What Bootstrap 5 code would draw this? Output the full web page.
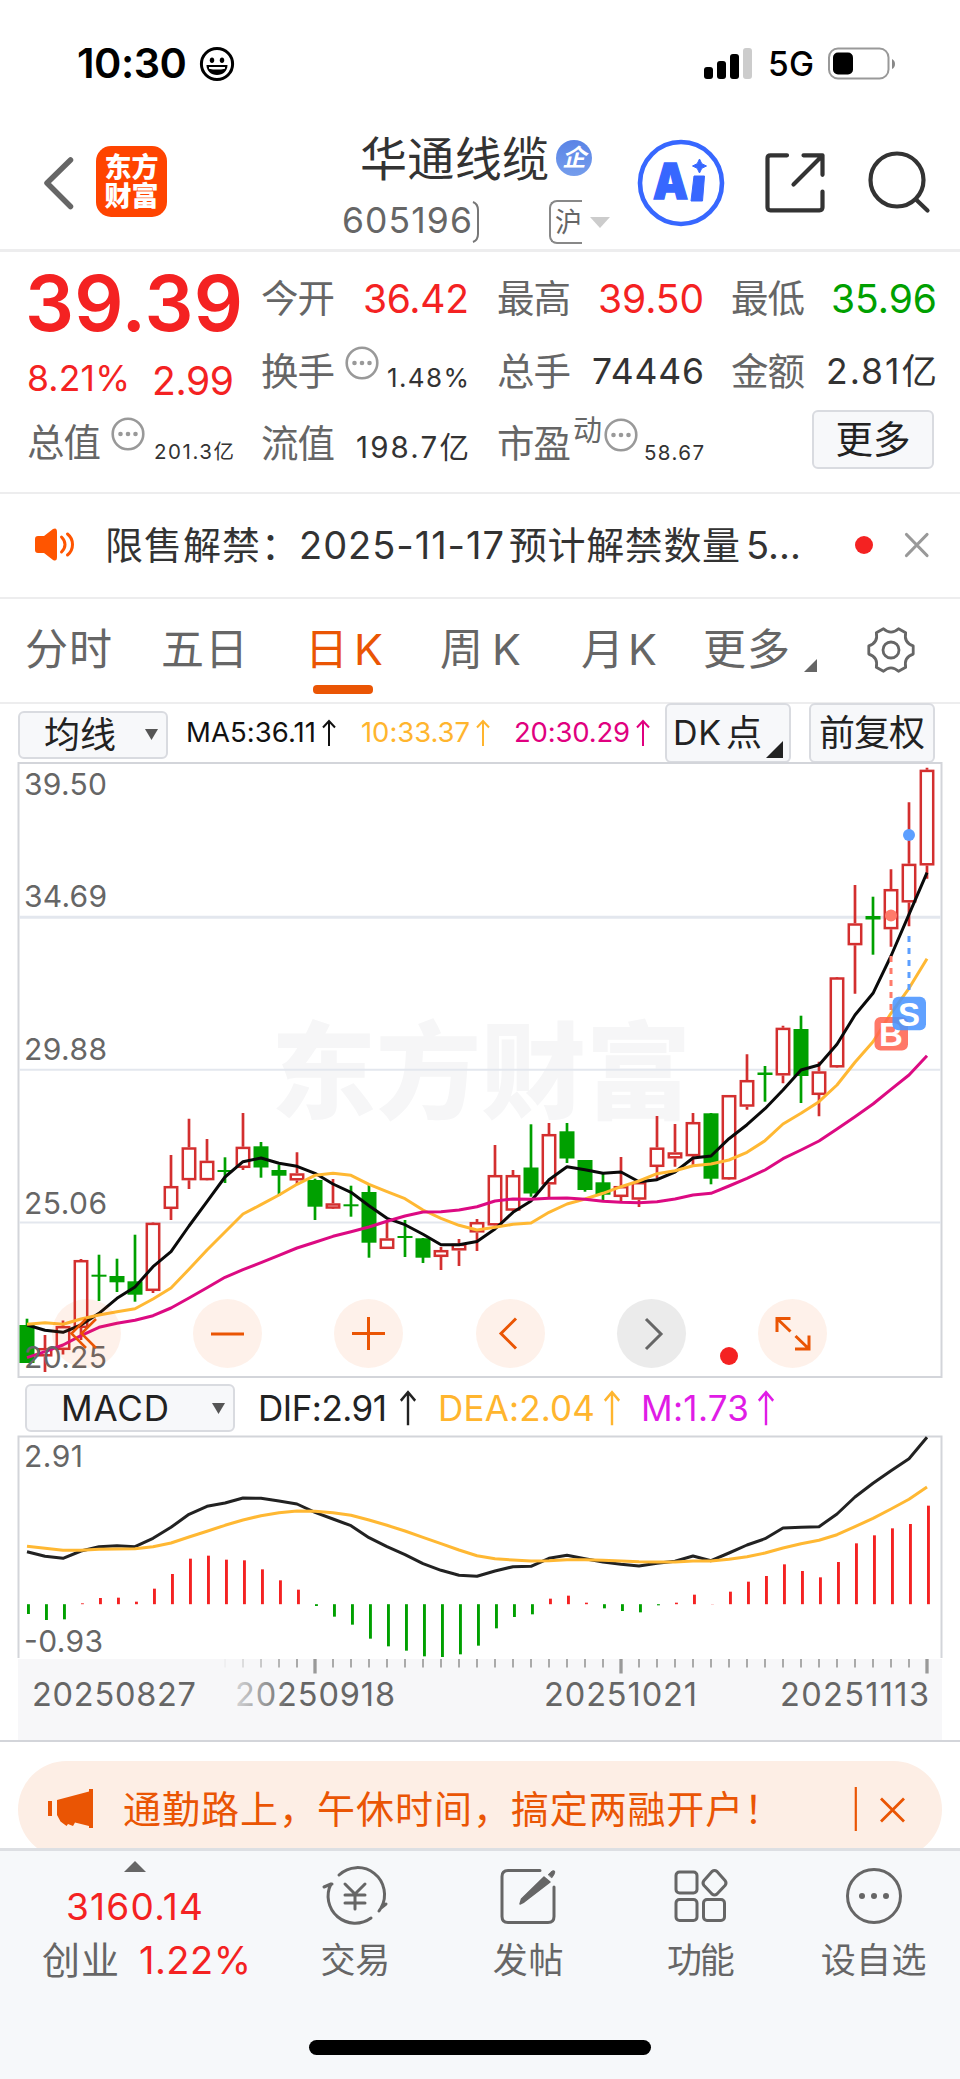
<!DOCTYPE html>
<html lang="zh-CN">
<head>
<meta charset="utf-8">
<meta name="viewport" content="width=device-width, initial-scale=1">
<title>华通线缆 605196</title>
<link href="https://cdn.jsdelivr.net/npm/bootstrap@5.3.0/dist/css/bootstrap.min.css" rel="stylesheet">
<style>
:root{--up:#f42222;--down:#00a000;--brand:#ea5504;--ink:#333;--muted-ink:#666;--rule:#ededee;--panel:#f7f8fa}
body{margin:0;width:960px;height:2079px;overflow:hidden;background:#fff;color:var(--ink);font-family:Inter,"Noto Sans CJK SC",sans-serif;line-height:1}
svg{display:block;flex:none;overflow:visible}
.screen{width:960px;height:2079px}
span[data-w],.cjk{display:inline-block;white-space:nowrap;flex:none}
.up{color:var(--up)}.down{color:var(--down)}.dim{color:var(--muted-ink)}
.f38{font-size:37.5px}.f39{font-size:39px}.f355{font-size:35.5px}.f30{font-size:29.5px}.f26{font-size:26px}.f20{font-size:20.5px}
.f38.dim{margin-top:1px}
.statusbar{height:98px;padding:30px 64px 0 77px}
.statusbar .clock{font-size:41.5px;font-weight:600;color:#000}
.statusbar .net{font-size:33.5px;font-weight:500;color:#000;margin:2px 12px 0 14px}
.titlebar{height:154px;border-bottom:3px solid var(--rule)}
.titlebar .left{width:342px;padding:48px 0 0 42px}
.app-logo{width:71px;height:71px;border-radius:15px;background:#ff4400;color:#fff;font-size:27px;font-weight:800;padding-top:7px;margin-left:22px;text-align:center;line-height:29px}
.stock{width:288px}
.stock .name{font-size:47px;padding:36px 0 0 18px;height:84px}
.ent{width:36px;height:36px;margin-left:7px;border-radius:50%;background:linear-gradient(#5a84e6,#759dec);color:#fff;font-size:24px;font-weight:700;font-style:italic;line-height:36px;text-align:center}
.exch{width:33px;height:44.5px;margin-left:69px;border:2px solid #888;border-right:0;border-radius:8px 0 0 8px;font-size:27px;padding-left:4px}
.quotes{height:242px;border-bottom:2px solid var(--rule);padding-left:27px}
.q-col{flex:none;width:208px;margin-right:28px}
.q-col:nth-child(1){width:212px;margin-right:22px}
.q-col:nth-child(3){width:207px;margin-right:27px}
.q-col:nth-child(4){width:206px;margin-right:0}
.q-cell{height:72px;padding-top:28px}
.q-cell:first-child{padding-top:27px}
.info{margin:-6px 0 0 10px}
.more-btn{width:122px;height:59px;margin-right:3px;border:2px solid #d9dbe0;border-radius:6px;background:var(--panel);color:#222}
.notice{height:105px;border-bottom:2px solid var(--rule);padding:0 0 2px 34px;font-size:38px}
.tabs-row{height:105px;border-bottom:2px solid var(--rule);font-size:43px;color:var(--muted-ink);padding:0 0 2px 25px}
.tabs-row .active-tab{color:var(--brand)}
.tabs-row .active-tab::after{content:"";position:absolute;left:8px;top:57px;width:60px;height:9px;border-radius:4px;background:var(--brand)}
.ma-row{height:58px;padding-left:18px;font-size:27.5px}
.pill{border:2px solid #d9dbe0;border-radius:6px;background:var(--panel);color:#222;font-size:36px}
.chart-box{height:978px}
.chart-box svg text{font-family:Inter,"Noto Sans CJK SC",sans-serif}
.chart-tools{left:51.5px;top:537px;gap:72.4px}
.chart-tools button{width:69px;height:69px;border:0;padding:0;border-radius:50%;background:rgba(240,90,10,.085)}
.chart-tools button.off{background:#ebebeb}
.chart-tools .dot{left:668.5px;top:48px;width:18px;height:18px;border-radius:50%;background:var(--up)}
.macd-row{left:25px;top:622px;font-size:35px}
.promo-wrap{height:108px;border-top:2px solid #d3d5da;padding:19px 18px 0;overflow:hidden}
.promo{height:97px;border-radius:48.5px;background:#fdeee5;color:var(--brand);font-size:38px;padding:0 0 1px 30px}
.foot{height:231px;background:#f6f8fa;border-top:3px solid #dddfe3}
.foot .idx{width:269px;flex:none}
.foot .item{flex:1 1 0;width:0;padding-top:12px}
.foot .lbl{font-size:35px;color:var(--muted-ink);margin-top:14px}
.home-bar{left:309px;top:189px;width:342px;height:15px;border-radius:8px;background:#000}
</style>
</head>
<body>
<div class="screen d-flex flex-column">

<header>
  <div class="statusbar d-flex align-items-center">
    <div class="d-flex align-items-center">
      <span class="clock" data-w="110">10:30</span>
      <svg width="36" height="36" viewBox="199 46 36 36" style="margin-left:12px"><circle cx="217" cy="64" r="15.6" fill="none" stroke="#000" stroke-width="3"/><ellipse cx="212" cy="60.3" rx="2.2" ry="2.7"/><ellipse cx="222" cy="60.3" rx="2.2" ry="2.7"/><path d="M206.5 65h21c0 6-4.500 10-10.500 10s-10.500-4-10.500-10z"/><path d="M209 67h16v1.700q-8 1.800-16 0z" fill="#fff"/></svg>
    </div>
    <svg class="ms-auto" width="50" height="34" viewBox="702 47 50 34"><rect x="702" y="67" width="9" height="12" rx="3"/><rect x="715" y="61" width="9" height="18" rx="3"/><rect x="728" y="54" width="9" height="25" rx="3"/><rect x="741" y="48" width="9" height="31" rx="3" fill="#ccc"/></svg>
    <span class="net" data-w="46">5G</span>
    <svg width="70" height="34" viewBox="826 47 70 34"><rect x="829" y="48.500" width="59.500" height="30" rx="9" fill="none" stroke="#999" stroke-width="2"/><rect x="833" y="52.500" width="20" height="22" rx="5"/><path d="M892 59q3 1.500 3 5t-3 5z" fill="#888"/></svg>
  </div>
  <div class="titlebar d-flex">
    <div class="left d-flex">
      <svg width="32" height="71" viewBox="42 146 32 71"><path d="M70.500 160L47 183l23.500 23.500" fill="none" stroke="#666" stroke-width="5.500" stroke-linecap="round" stroke-linejoin="round"/></svg>
      <div class="app-logo">东方<br>财富</div>
    </div>
    <div class="stock">
      <div class="name d-flex align-items-center"><span data-w="189">华通线缆</span><span class="ent">企</span></div>
      <div class="d-flex align-items-center dim" style="margin-top:17px;height:46px">
        <span class="f355" data-w="130" style="margin-top:-2px">605196</span>
        <svg width="8" height="42" viewBox="472 200 8 42"><path d="M473 201q5 2 5 8v24q0 6-5 8" fill="none" stroke="#777" stroke-width="2"/></svg>
        <span class="exch d-flex align-items-center">沪</span>
        <svg width="20" height="11" viewBox="0 0 20 11" style="margin-left:8px"><path d="M0 0h20L10 11z" fill="#ccc"/></svg>
      </div>
    </div>
    <svg width="308" height="100" viewBox="630 133 308 100" style="margin-top:35px">
      <circle cx="681" cy="183" r="41" fill="none" stroke="#3767ff" stroke-width="4.600"/>
      <text x="653" y="199" font-family="Inter, sans-serif" font-weight="900" font-size="50" fill="#3767ff" stroke="#3767ff" stroke-width="1.500" textLength="35" lengthAdjust="spacingAndGlyphs">A</text>
      <path d="M694 176h10.500l-2 25h-11.500z" fill="#3767ff" stroke="#3767ff" stroke-linejoin="round"/>
      <path d="M699.500 159l2.300 4.700 4.700 2.300-4.700 2.300-2.300 4.700-2.300-4.700-4.700-2.300 4.700-2.300z" fill="#3767ff" stroke="#3767ff"/>
      <g fill="none" stroke="#333" stroke-width="4.200" stroke-linecap="round" stroke-linejoin="round"><path d="M787 155.300h-16.500q-3 0-3 3v49q0 3 3 3h49q3 0 3-3V191.500M803.500 155.300h19v19.500M822 156l-28.500 28.500"/><circle cx="897" cy="180" r="26.500"/><path d="M916 199.500l11.500 11"/></g>
    </svg>
  </div>
</header>

<section class="quotes d-flex">
  <div class="q-col">
    <div class="up" style="height:95px;padding-top:13px;margin-left:-2px"><span data-w="218" style="font-size:77px;font-weight:600">39.39</span></div>
    <div class="d-flex justify-content-between up" style="height:66px;padding-top:14px"><span class="f355" data-w="103">8.21%</span><span class="f39" data-w="82" style="margin-right:5px">2.99</span></div>
    <div class="d-flex justify-content-between" style="padding-top:10px"><span class="d-flex"><span class="f38 dim" data-w="74">总值</span><svg class="info" width="34" height="34" viewBox="-17 -17 34 34"><use href="#dots"/></svg></span><span class="f20" data-w="80" style="margin:19px 5px 0 0">201.3亿</span></div>
  </div>
  <div class="q-col">
    <div class="q-cell d-flex justify-content-between"><span class="f38 dim" data-w="74">今开</span><span class="f39 up" data-w="106">36.42</span></div>
    <div class="q-cell d-flex justify-content-between"><span class="d-flex"><span class="f38 dim" data-w="74">换手</span><svg class="info" width="34" height="34" viewBox="-17 -17 34 34"><use href="#dots"/></svg></span><span class="f26" data-w="82" style="margin-top:13px">1.48%</span></div>
    <div class="q-cell d-flex justify-content-between"><span class="f38 dim" data-w="74">流值</span><span class="f30" data-w="113" style="margin-top:9px">198.7亿</span></div>
  </div>
  <div class="q-col">
    <div class="q-cell d-flex justify-content-between"><span class="f38 dim" data-w="74">最高</span><span class="f39 up" data-w="106">39.50</span></div>
    <div class="q-cell d-flex justify-content-between"><span class="f38 dim" data-w="74">总手</span><span class="f355" data-w="112" style="margin-top:2px">74446</span></div>
    <div class="q-cell d-flex justify-content-between"><span class="d-flex"><span class="f38 dim" data-w="74">市盈</span><span class="dim" style="font-size:29px;margin:-8px 0 0 2px" data-w="30">动</span><svg class="info" width="34" height="34" viewBox="-17 -17 34 34" style="margin-left:2px"><use href="#dots"/></svg></span><span class="f20" data-w="60" style="margin-top:19px">58.67</span></div>
  </div>
  <div class="q-col">
    <div class="q-cell d-flex justify-content-between"><span class="f38 dim" data-w="74">最低</span><span class="f39 down" data-w="106">35.96</span></div>
    <div class="q-cell d-flex justify-content-between"><span class="f38 dim" data-w="74">金额</span><span class="f355" data-w="111" style="margin-top:2px">2.81亿</span></div>
    <div class="d-flex justify-content-end" style="padding-top:14px"><div class="more-btn d-flex align-items-center justify-content-center f38"><span data-w="75">更多</span></div></div>
  </div>
</section>

<section class="notice d-flex align-items-center">
  <svg width="40" height="34" viewBox="33 528 40 34" fill="#ff5500"><path d="M37 536h6l9-7q4-2 4 3v25q0 5-4 3l-9-7h-6q-3 0-3-3v-11q0-3 3-3z"/><path d="M60.500 537q3.500 3.500 3.500 7.500t-3.500 7.500M66.500 534q5 4 5 10.500T66.500 555" fill="none" stroke="#ff5500" stroke-width="3" stroke-linecap="round"/></svg>
  <span data-w="194" style="margin-left:31px">限售解禁：</span><span data-w="205">2025-11-17</span><span data-w="231" style="margin-left:5px">预计解禁数量</span><span data-w="55" style="margin-left:6px">5...</span>
  <svg width="74" height="34" viewBox="855 527.500 74 34" style="margin-left:54px"><circle cx="864" cy="544.500" r="9" fill="#f42222"/><path d="M906.500 534l20.500 21M927 534l-20.500 21" stroke="#999" stroke-width="3.200" stroke-linecap="round"/></svg>
</section>

<nav class="tabs-row d-flex align-items-center">
  <span data-w="87">分时</span>
  <span data-w="87" style="margin-left:49px">五日</span>
  <span class="active-tab position-relative cjk" style="margin-left:57px"><span data-w="78">日 K</span></span>
  <span data-w="81" style="margin-left:57px">周 K</span>
  <span data-w="76" style="margin-left:60px">月 K</span>
  <span data-w="87" style="margin-left:46px">更多</span>
  <svg width="13" height="13" viewBox="0 0 13 13" style="margin:32px 0 0 14px"><path d="M13 0v13H0z" fill="#666"/></svg>
  <svg width="50" height="50" viewBox="-25 -25 50 50" style="margin-left:49px" fill="none" stroke="#666" stroke-width="2.800" stroke-linejoin="round"><circle r="8"/><path d="M22.200-4.100V4.100Q12.600 7.300 14.700 17.200L7.500 21.300Q0 14.500-7.500 21.300L-14.700 17.200Q-12.600 7.300-22.200 4.100V-4.100Q-12.600-7.300-14.700-17.200L-7.500-21.300Q0-14.500 7.500-21.300L14.700-17.200Q12.600-7.300 22.200-4.100Z"/></svg>
</nav>

<section class="ma-row d-flex align-items-center">
  <div class="pill d-flex align-items-center" style="width:150px;height:48px;padding-left:24px;margin-top:3px"><span data-w="72">均线</span><svg width="13" height="11" viewBox="0 0 13 11" style="margin-left:29px"><path d="M0 0h13L6.500 11z" fill="#555"/></svg></div>
  <span data-w="130" style="margin-left:18px;color:#111">MA5:36.11</span><svg width="16" height="28" viewBox="-8 -14 16 28" style="margin-left:5px;color:#111"><use href="#arr"/></svg>
  <span data-w="109" style="margin-left:24px;color:#ffb52e">10:33.37</span><svg width="16" height="28" viewBox="-8 -14 16 28" style="margin-left:5px;color:#ffb52e"><use href="#arr"/></svg>
  <span data-w="116" style="margin-left:23px;color:#e0007f">20:30.29</span><svg width="16" height="28" viewBox="-8 -14 16 28" style="margin-left:5px;color:#e0007f"><use href="#arr"/></svg>
  <div class="pill d-flex align-items-center position-relative" style="width:126px;height:60px;margin-left:14px;padding-left:6px"><span data-w="48" style="font-size:34px">DK</span><span class="cjk" style="margin-left:5px">点</span><svg class="position-absolute" width="17" height="17" viewBox="0 0 17 17" style="right:6px;bottom:3px"><path d="M17 0v17H0z" fill="#222"/></svg></div>
  <div class="pill d-flex align-items-center justify-content-center" style="width:126px;height:60px;margin-left:18px"><span data-w="106">前复权</span></div>
</section>

<section class="chart-box position-relative">
  <svg width="960" height="978" viewBox="0 762 960 978" id="kchart">
    <defs>
      <g id="dots"><circle r="15.300" fill="none" stroke="#999" stroke-width="2.600"/><g fill="#999"><circle cx="-7.500" r="2.300"/><circle r="2.300"/><circle cx="7.500" r="2.300"/></g></g>
      <g id="arr"><path d="M0 13V-12M-6-5.500L0-12l6 6.500" fill="none" stroke="currentColor" stroke-width="2"/></g>
      <linearGradient id="fade" gradientUnits="userSpaceOnUse" x1="218" x2="290" y1="0" y2="0"><stop offset="0" stop-color="#f7f7f9"/><stop offset="1" stop-color="#f7f7f9" stop-opacity="0"/></linearGradient>
    </defs>
    <text x="271" y="1110" font-size="105" font-weight="900" fill="#f6f6f7" textLength="420">东方财富</text>
    <g fill="none" stroke="#d3d5da" stroke-width="2"><rect x="18.500" y="763" width="923" height="614"/><path d="M18.500 1658V1436.500H941.500V1658"/></g>
    <g stroke="#e3e7ee" stroke-width="2"><path d="M19 917.300H941" stroke-width="3"/><path d="M19 1069.700H941M19 1222.500H941"/></g>
    <rect x="18" y="1659" width="924" height="81" fill="#f7f7f9"/>
    <g id="marks"></g>
    <g fill="none" stroke-width="3" stroke-linejoin="round" id="lines"></g>
    <g fill="#666" font-size="30">
      <text x="24" y="795" textLength="83">39.50</text><text x="24" y="906.500" textLength="83">34.69</text><text x="24" y="1059.500" textLength="83">29.88</text><text x="24" y="1213.500" textLength="83">25.06</text><text x="24" y="1367.500" textLength="83">20.25</text>
      <text x="24" y="1466.500" textLength="59">2.91</text><text x="24" y="1651.500" textLength="79">-0.93</text>
    </g>
    <g fill="#666" font-size="32.500">
      <text x="32" y="1705.500" textLength="164">20250827</text><text x="235" y="1705.500" textLength="160">20250918</text><text x="544" y="1705.500" textLength="153">20251021</text><text x="780" y="1705.500" textLength="149">20251113</text>
    </g>
    <rect x="210" y="1659" width="75" height="60" fill="url(#fade)"/>
    <g stroke-width="3" stroke-dasharray="6 6"><path d="M891 956v54" stroke="#ff7b6b"/><path d="M909 936v54" stroke="#5c9fff"/></g>
    <circle cx="891" cy="915.500" r="6" fill="#ff7b6b"/><circle cx="909" cy="835" r="6" fill="#5c9fff"/>
    <g font-weight="700" font-size="33" fill="#fff" text-anchor="middle">
      <rect x="874.500" y="1017" width="33.500" height="33.500" rx="6" fill="#ff6450" fill-opacity=".87"/><text x="891" y="1045.500" style="font-family:'Liberation Sans',sans-serif">B</text>
      <rect x="892.500" y="996.700" width="33.500" height="33.500" rx="6" fill="#4a94ff" fill-opacity=".88"/><text x="909" y="1025.500" style="font-family:'Liberation Sans',sans-serif">S</text>
    </g>
  </svg>
  <div class="chart-tools position-absolute d-flex">
    <button><svg width="69" height="69" fill="none" stroke="#ea5504" stroke-width="2.500"><path d="M34 20L19.500 34.500 34 49M44 20L29.500 34.500 44 49"/></svg></button>
    <button><svg width="69" height="69" stroke="#ea5504" stroke-width="3"><path d="M18 35h33"/></svg></button>
    <button><svg width="69" height="69" stroke="#ea5504" stroke-width="3"><path d="M18 34.500h33M34.500 18v33"/></svg></button>
    <button><svg width="69" height="69" fill="none" stroke="#ea5504" stroke-width="3"><path d="M40 19.500L25 34.500l15 15"/></svg></button>
    <button class="off"><svg width="69" height="69" fill="none" stroke="#666" stroke-width="3"><path d="M29 20l15 15-15 15"/></svg></button>
    <button><svg width="69" height="69" fill="none" stroke="#ea5504" stroke-width="3"><path d="M32.500 19.500h-13.500v13.500M19.500 20l13 12.500M37 50h14V36.500M50.500 49.500l-13-12.500"/></svg></button>
    <span class="dot position-absolute"></span>
  </div>
  <div class="macd-row position-absolute d-flex align-items-center">
    <div class="pill d-flex align-items-center" style="width:210px;height:48px;padding-left:34px"><span data-w="108" style="font-size:35px">MACD</span><svg width="13" height="11" viewBox="0 0 13 11" style="margin-left:43px"><path d="M0 0h13L6.500 11z" fill="#555"/></svg></div>
    <span data-w="129" style="margin-left:23px;color:#222">DIF:2.91</span><svg width="16" height="36" viewBox="-8 -18 16 36" style="margin-left:13px;color:#222"><use href="#arr" transform="scale(1.200 1.320)"/></svg>
    <span data-w="157" style="margin-left:22px;color:#ffb52e">DEA:2.04</span><svg width="16" height="36" viewBox="-8 -18 16 36" style="margin-left:9px;color:#ffb52e"><use href="#arr" transform="scale(1.200 1.320)"/></svg>
    <span data-w="108" style="margin-left:21px;color:#e01ce6">M:1.73</span><svg width="16" height="36" viewBox="-8 -18 16 36" style="margin-left:9px;color:#e01ce6"><use href="#arr" transform="scale(1.200 1.320)"/></svg>
  </div>
</section>

<section class="promo-wrap">
  <div class="promo d-flex align-items-center">
    <svg width="45" height="40" viewBox="48 1790 45 40" fill="#ea5504"><path d="M48 1802h4v15h-4zM57 1801l32-8.500v-2.500h4v39h-4v-2l-14-3.500-2 3.500-5-2-1.500 2-6-4.500-3.500-6.500z"/></svg>
    <span data-w="194" style="margin-left:30px">通勤路上，</span><span data-w="194">午休时间，</span><span data-w="271">搞定两融开户！</span>
    <svg class="ms-auto" width="90" height="46" viewBox="852 1786 90 46"><path d="M855.800 1787v44" stroke="#ea5504" stroke-width="2.200"/><path d="M881 1798.500l23 23M904 1798.500l-23 23" stroke="#ea5504" stroke-width="2.800"/></svg>
  </div>
</section>

<footer class="foot position-relative d-flex">
  <div class="idx">
    <svg width="22" height="11" viewBox="0 0 22 11" style="margin:10px 0 0 124px"><path d="M11 0l11 11H0z" fill="#666"/></svg>
    <div class="up" style="padding:16px 0 0 66px;font-size:37px"><span data-w="137">3160.14</span></div>
    <div class="d-flex" style="padding:16px 0 0 42px;font-size:38px"><span class="dim" data-w="77">创业</span><span class="up" data-w="112" style="margin-left:20px">1.22%</span></div>
  </div>
  <div class="item d-flex flex-column align-items-center">
    <svg width="66" height="66" viewBox="-33 -33 66 66" fill="none" stroke="#666" stroke-width="3" stroke-linecap="round" stroke-linejoin="round"><path d="M-16-21A27 27 0 0 1 26 12M26 12l5-4M26 12l-2 3M16 22A27 27 0 0 1-24-12M-24-12l-7 3M-24-12l1 0"/><path d="M-10-12L0-2l10-10M0-2v15M-10-1h20M-10 7h20"/></svg>
    <span class="lbl" data-w="70">交易</span>
  </div>
  <div class="item d-flex flex-column align-items-center">
    <svg width="66" height="66" viewBox="-33 -33 66 66" fill="none" stroke="#666" stroke-width="3" stroke-linecap="round" stroke-linejoin="round"><path d="M12-25.500h-32q-6 0-6 6v40q0 6 6 6h40q6 0 6-6V-9"/><path d="M16-19l6 5L-4 6l-4 2 1.500-5z" fill="#666" stroke-width="1.500"/><path d="M20.500-21.500q4-5 6-3.500 1 2-2.500 6.500z" fill="#666" stroke-width="1"/></svg>
    <span class="lbl" data-w="71">发帖</span>
  </div>
  <div class="item d-flex flex-column align-items-center">
    <svg width="66" height="66" viewBox="-33 -33 66 66" fill="none" stroke="#666" stroke-width="3" stroke-linejoin="round"><rect x="-25" y="-24" width="21" height="21" rx="3.500"/><rect x="-25" y="3.500" width="21" height="21" rx="3.500"/><rect x="2.500" y="3.500" width="21" height="21" rx="3.500"/><path d="M11-24.500q2.500-2 5 0l8 9q2 2.500 0 5l-8 8.500q-2.500 2-5 0l-8-8.500q-2-2.500 0-5z"/></svg>
    <span class="lbl" data-w="68">功能</span>
  </div>
  <div class="item d-flex flex-column align-items-center">
    <svg width="66" height="66" viewBox="-33 -33 66 66"><circle r="26.500" fill="none" stroke="#666" stroke-width="3"/><g fill="#666"><circle cx="-12" r="3"/><circle r="3"/><circle cx="12" r="3"/></g></svg>
    <span class="lbl" data-w="106">设自选</span>
  </div>
  <div class="home-bar position-absolute"></div>
</footer>
</div>

<script src="https://cdn.jsdelivr.net/npm/bootstrap@5.3.0/dist/js/bootstrap.bundle.min.js"></script>
<script>
// Track each label so that it fills its slot width exactly.
document.querySelectorAll('span[data-w]').forEach(function (el) {
  var n = [...el.textContent].length - 1;
  if (n < 1) return;
  var ls = (+el.dataset.w - el.getBoundingClientRect().width) / n;
  el.style.letterSpacing = ls + 'px';
  el.style.marginRight = (parseFloat(getComputedStyle(el).marginRight) - ls) + 'px';
});

// Candles: [up?, high, body top, body bottom, low]
var K = [
[0,1318.7,1325,1363,1363],[1,1335,1348,1356.5,1372],[1,1320.5,1326,1350,1354.5],[1,1259,1260,1328,1340],[0,1254.7,1274.7,1276.7,1301],
[0,1258.7,1276,1282.3,1292],[0,1234.7,1281.3,1294.7,1301.7],[1,1222.3,1222.7,1291,1293],[1,1155,1186,1209,1220],[1,1118.7,1147.3,1180.3,1189],
[1,1139,1160.7,1180.3,1180],[0,1157.3,1170,1172,1183],[1,1113,1146.7,1168,1170],[0,1142,1146.3,1167.5,1177.7],[0,1164.7,1170,1175.7,1196],
[1,1152.3,1173.3,1180.5,1184.7],[0,1178.7,1180,1206.7,1220],[1,1179,1203.3,1208.7,1208],[0,1185.7,1204.3,1206.3,1216.7],[0,1185,1192,1242.7,1257.7],
[1,1222,1238.3,1249,1249],[0,1220,1236,1238,1257],[0,1238,1238.3,1257.7,1263],[1,1247,1250,1257,1270],[1,1239,1243.7,1250.5,1266],
[1,1219,1222,1232.5,1251],[1,1145,1175,1225.5,1225],[1,1170,1175,1210.7,1210],[0,1124.3,1167.5,1193.5,1196.7],[1,1123,1134,1184.5,1198],
[0,1123,1131.3,1158.5,1163],[0,1160,1160,1190,1191.7],[0,1172,1182.3,1194.7,1200],[1,1157,1186,1197,1201],[1,1182,1182,1199.7,1207],
[1,1116,1147.5,1167,1179],[1,1124,1152.3,1158.5,1166.7],[1,1113,1122,1156.3,1165.7],[0,1113,1113.3,1178.7,1184.3],[1,1095,1095,1179.5,1179],
[1,1054.3,1080,1106.7,1109.7],[0,1066,1072.5,1075,1101.7],[1,1025.7,1027.7,1075.5,1083.3],[0,1015.7,1029,1076,1103],[1,1061.7,1071.3,1095,1116.3],
[1,978,977.3,1067.5,1067],[1,885,923.3,945.3,993.7],[0,896.7,916,919.5,954.7],[1,869.3,889,929.3,946.7],[1,802.3,863.7,902.5,926.3],[1,767.7,769.7,865.5,878.7]];
var out = '', x;
K.forEach(function (k, i) {
  x = 27 + 18 * i;
  if (k[0]) {
    out += '<path d="M' + x + ' ' + k[1] + 'V' + k[2] + 'M' + x + ' ' + k[3] + 'V' + k[4] + '" stroke="#d32f2f" stroke-width="2.700"/>' +
      '<rect x="' + (x - 6.2) + '" y="' + (k[2] + 1.2) + '" width="12.4" height="' + (k[3] - k[2] - 2.4) + '" fill="#fff" stroke="#d32f2f" stroke-width="2.500"/>';
  } else {
    out += '<path d="M' + x + ' ' + k[1] + 'V' + k[4] + '" stroke="#00a000" stroke-width="2.700"/>' +
      '<rect x="' + (x - 7.5) + '" y="' + k[2] + '" width="15" height="' + (k[3] - k[2]) + '" fill="#00a000"/>';
  }
});

// MACD histogram ends, a third of a pixel per unit below y = 1370
var H = [732,750,748,700,684,683,695,656,612,566,557,569,571,598,631,659,708,740,764,806,829,842,859,861,853,827,775,741,733,686,677,698,715,723,727,706,698,674,702,665,635,618,583,603,622,576,520,496,475,462,407];
H.forEach(function (v, i) {
  var y = 1370 + v / 3, z = 1604.2;
  out += '<rect x="' + (27 + 18 * i) + '" y="' + Math.min(y, z) + '" width="2.900" height="' + Math.abs(y - z) + '" fill="' + (v > 702 ? '#00a000' : '#f42222') + '"/>';
});
for (var i = 11; i <= 50; i++) {
  var major = i === 16 || i === 33 || i === 50;
  out += '<path d="M' + (27 + 18 * i) + ' 1659v' + (major ? 14.5 : 8.5) + '" stroke="' + (major ? '#999' : '#aaa') + '" stroke-width="' + (major ? 3.3 : 2) + '"/>';
}
document.getElementById('marks').innerHTML = out;

function line(points, color, map) {
  return '<polyline stroke="' + color + '" points="' + points.map(function (v, i) { return (27 + 18 * i) + ',' + map(v).toFixed(1); }).join(' ') + '"/>';
}
var id = function (v) { return v; }, sub = function (v) { return 1370 + v / 3; };
var MA5 = [1325,1330.3,1332.3,1325,1313.3,1298.3,1287,1266.7,1251.7,1226,1201.7,1177,1161.7,1158,1163.3,1166.3,1173.3,1184,1192.3,1205.7,1218.3,1224.7,1234.3,1244.7,1244.7,1241.5,1229,1212.3,1201,1179.7,1166.7,1169.7,1173.3,1172,1181.7,1179.7,1172,1158,1156,1138.7,1124.7,1108.7,1090,1070,1065,1044.3,1015,993.3,956,914.3,872.7];
var MA10 = [1324.3,1322.7,1324.3,1319,1315,1311.7,1308.7,1299,1288,1269.3,1250,1232,1214,1204.7,1195,1184.3,1175.3,1173.3,1175.3,1184.3,1191.7,1198.7,1210,1218.3,1225.3,1230,1227.3,1224.3,1223,1212.3,1204,1199,1193.3,1186.7,1181,1173.7,1170.7,1165.7,1164,1160,1152.3,1140.7,1124,1113.3,1101.7,1085,1062.2,1041.7,1013.3,988.3,958.7];
var MA20 = [1357.7,1351.7,1345,1335.7,1327.3,1323.3,1320.3,1315.7,1308,1298,1287.7,1277.3,1269.7,1262.7,1255.3,1248,1242.3,1236.3,1231.7,1227,1221.3,1216,1212,1211.7,1210,1206.7,1201,1199,1199.3,1198.3,1198,1199.3,1201.3,1202.3,1202.7,1201.7,1199,1195,1193.3,1186,1178.3,1170,1158.7,1150,1141,1129,1116.7,1104,1089.3,1075,1055.7];
var DIF = [545,559,565,543,530,527,530,505,472,433,409,399,384,385,393,402,427,447,467,503,530,554,581,601,616,619,603,590,589,565,556,566,576,583,588,580,574,558,572,549,525,506,474,472,470,432,381,340,302,266,202];
var DEA = [529,535,541,541,538,537,536,530,519,501,484,466,450,437,428,423,424,428,436,450,466,483,502,521,540,557,566,570,573,572,569,569,571,573,575,576,576,573,573,568,560,549,534,521,511,494,470,445,417,388,351];
document.getElementById('lines').innerHTML =
  line(MA5, '#0a0a0a', id) + line(MA10, '#ffb833', id) + line(MA20, '#dc0a82', id) +
  line(DIF, '#222', sub) + line(DEA, '#ffb833', sub);
</script>
</body>
</html>
